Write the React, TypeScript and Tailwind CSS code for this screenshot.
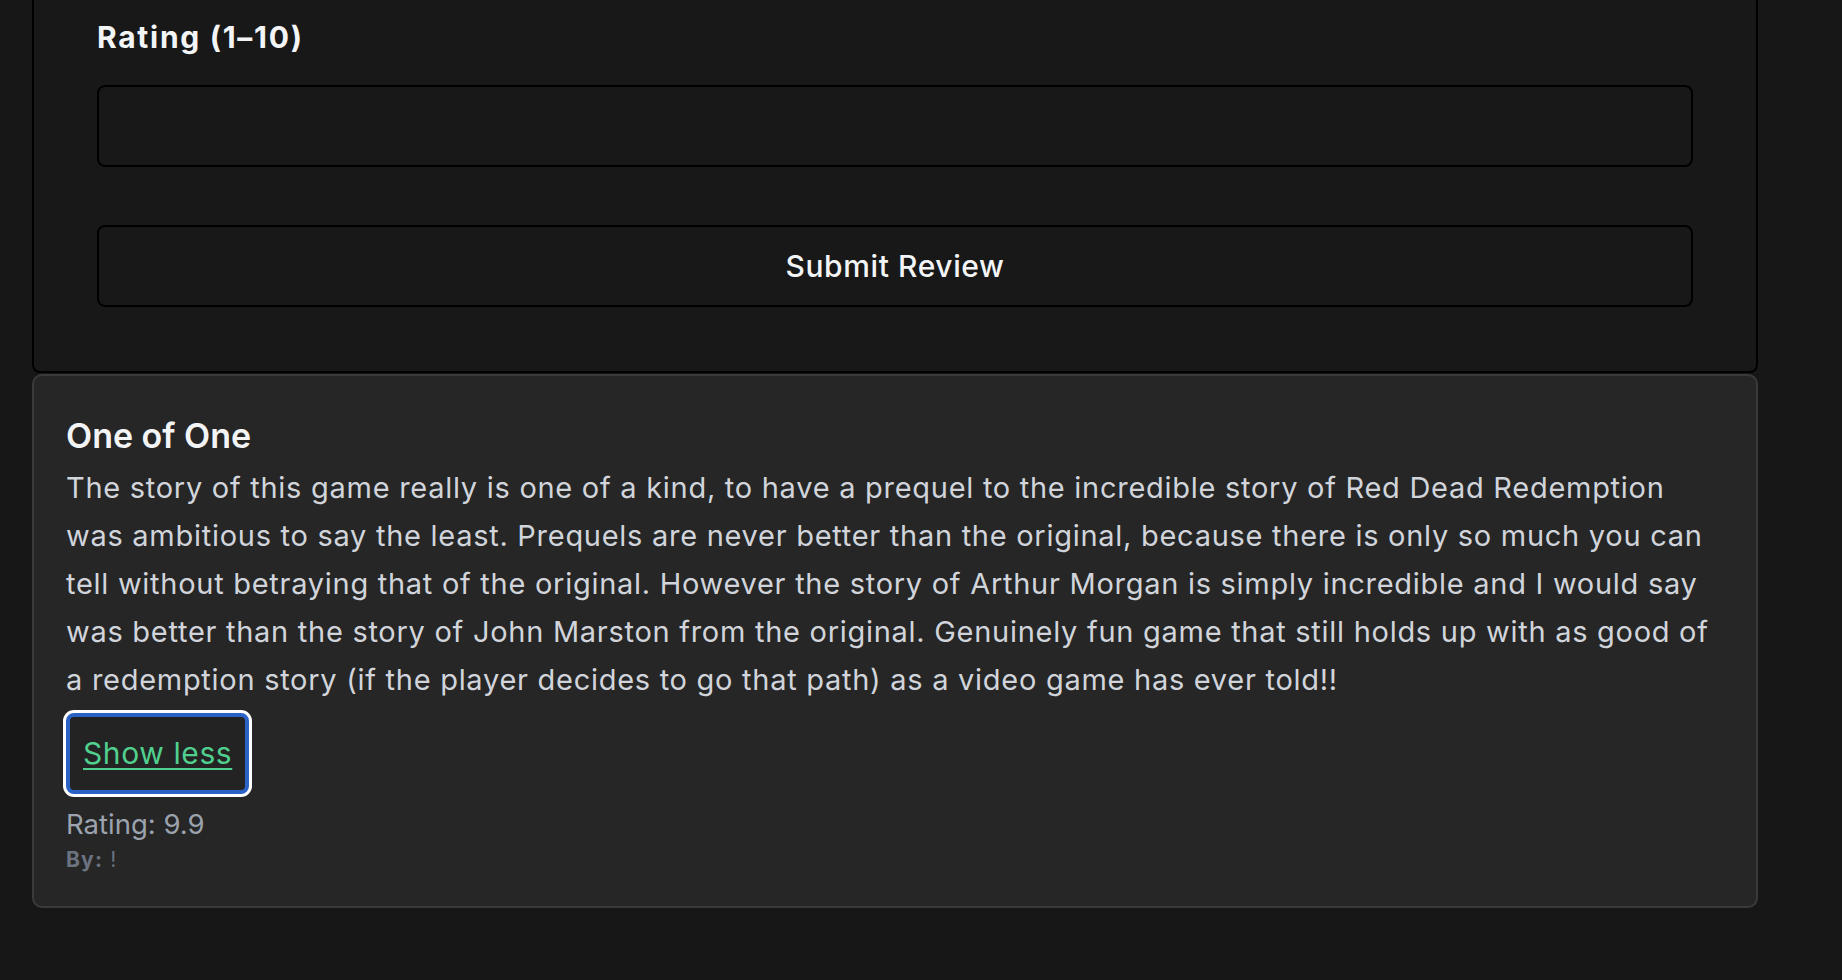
import React, { useState } from 'react';

const reviewText =
  'The story of this game really is one of a kind, to have a prequel to the incredible story of Red Dead Redemption was ambitious to say the least. Prequels are never better than the original, because there is only so much you can tell without betraying that of the original. However the story of Arthur Morgan is simply incredible and I would say was better than the story of John Marston from the original. Genuinely fun game that still holds up with as good of a redemption story (if the player decides to go that path) as a video game has ever told!!';

const ReviewForm: React.FC = () => {
  return (
    <form
      className="-mt-[40px] rounded-lg border-2 border-black bg-[#181818] px-[63px] pb-[64px] pt-[55px]"
      onSubmit={(e) => e.preventDefault()}
    >
      <label className="block text-[30px] font-bold leading-[40px] tracking-[1.7px] text-[#f3f4f6]">
        Rating (1–10)
      </label>
      <input
        type="number"
        className="mt-[28px] block h-[82px] w-full rounded-lg border-2 border-black bg-[#181818] px-4 text-[29px] text-[#f3f4f6] outline-none"
      />
      <button
        type="submit"
        className="mt-[58px] flex h-[82px] w-full items-center justify-center rounded-lg border-2 border-black bg-[#181818] text-[30px] font-medium tracking-[0.6px] text-[#f3f4f6]"
      >
        Submit Review
      </button>
    </form>
  );
};

interface ReviewCardProps {
  title: string;
  body: string;
  rating: number;
  author: string;
}

const ReviewCard: React.FC<ReviewCardProps> = ({ title, body, rating, author }) => {
  const [expanded, setExpanded] = useState(true);

  return (
    <div className="mt-px rounded-[10px] border-2 border-[#3a3a3a] bg-[#262626] p-8">
      <h3 className="text-[34px] font-semibold leading-[56px] text-[#f3f4f6]">{title}</h3>
      <p className="pr-[10px] text-[29px] leading-[48px] tracking-[0.72px] text-[#d1d5db]">
        {expanded ? body : body.slice(0, 200) + '...'}
      </p>
      <button
        onClick={() => setExpanded(!expanded)}
        className="mt-[9px] flex h-[81px] items-center rounded-[8px] border-[4px] border-[#2a62c6] bg-[#232323] px-[13px] text-[30px] tracking-[0.6px] text-[#50cf8e] underline decoration-2 underline-offset-[4px] shadow-[0_0_0_3px_#ffffff]"
      >
        {expanded ? 'Show less' : 'Show more'}
      </button>
      <p className="mt-[10px] text-[27.5px] leading-[40px] text-[#9ca3af]">Rating: {rating}</p>
      <p className="mt-[2px] text-[21px] leading-[28px] tracking-[1.2px] text-[#6b7280]">
        <span className="font-bold">By:</span> {author}
      </p>
    </div>
  );
};

export default function App() {
  return (
    <div
      className="flex min-h-screen flex-col overflow-hidden bg-[#171717]"
      style={{ fontFamily: 'Inter, "Noto Sans", sans-serif' }}
    >
      <div className="ml-[32px] w-[1726px]">
        <ReviewForm />
        <ReviewCard title="One of One" body={reviewText} rating={9.9} author="!" />
      </div>
    </div>
  );
}
